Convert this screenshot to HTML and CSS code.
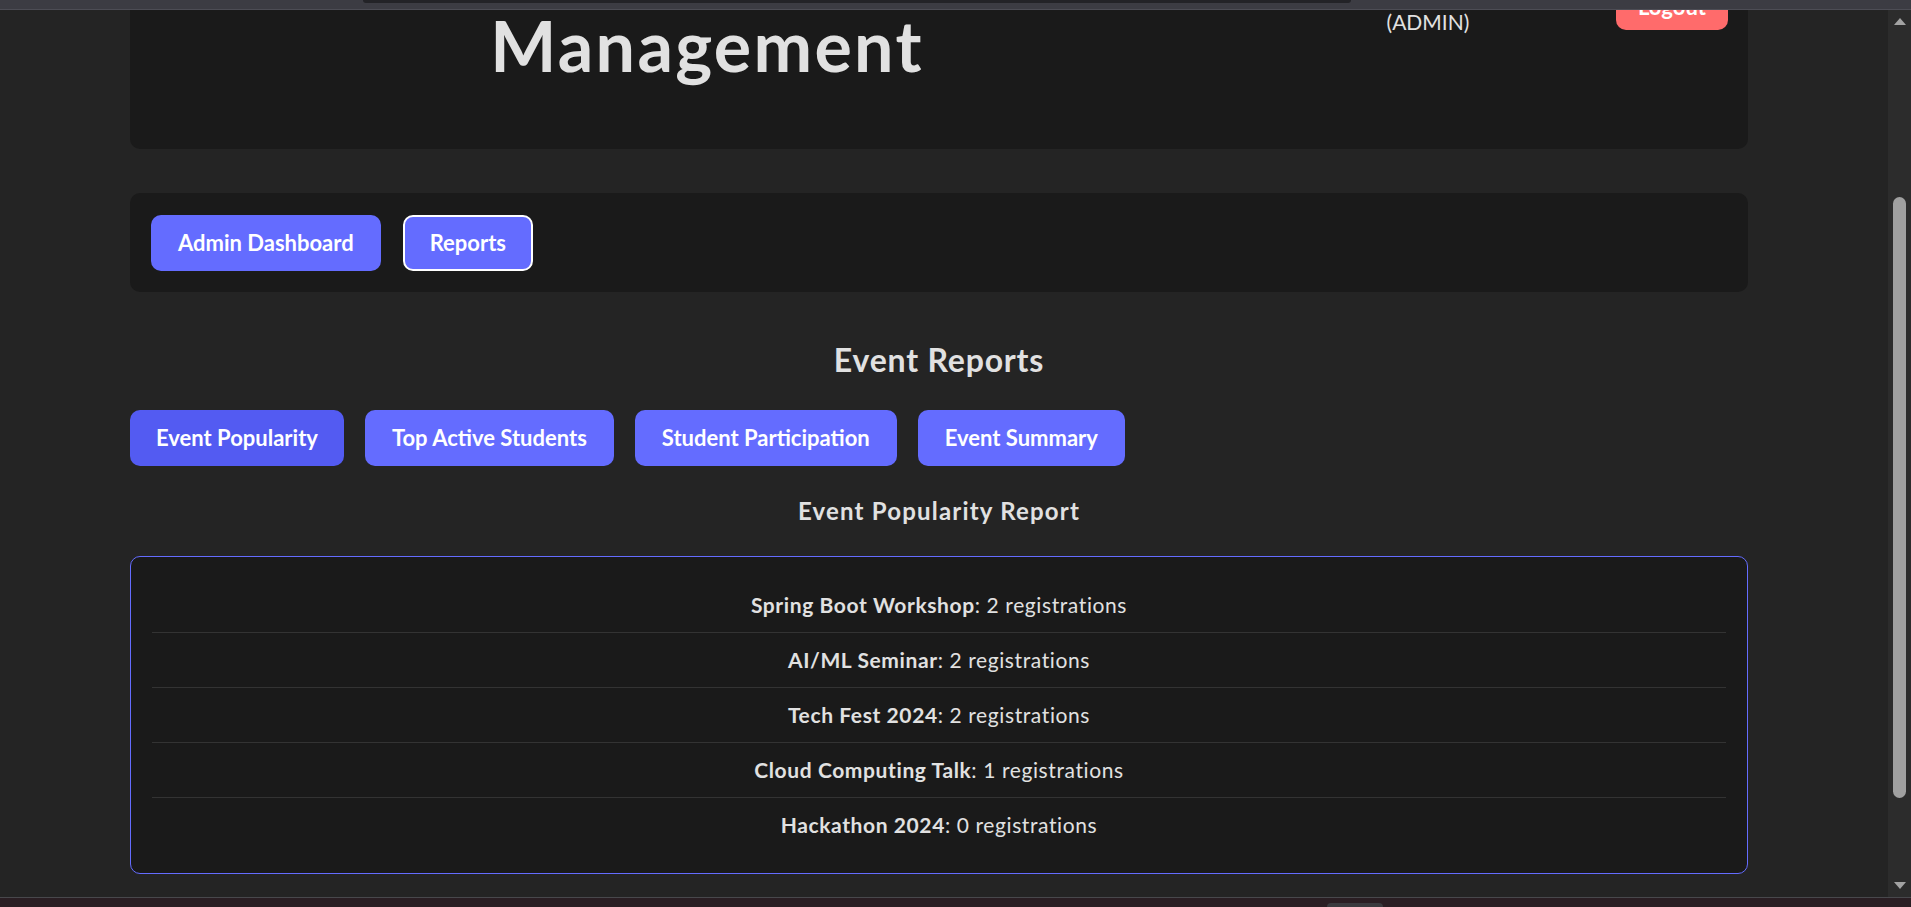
FILE: index.html
```html
<!DOCTYPE html>
<html lang="en">
<head>
<meta charset="utf-8">
<title>Event Reports</title>
<link rel="stylesheet" href="styles.css">
</head>
<body>
<div class="screen">
  <div class="chrome"><div class="chrome-tab"></div></div>
  <div class="middle">
    <div class="viewport">
      <div class="page">
        <header class="card header">
          <h1 class="title"><span class="title-line">College Event</span><span class="title-line">Management</span></h1>
          <div class="user">
            <div>Welcome, Admin</div>
            <div>(ADMIN)</div>
          </div>
          <button class="btn btn-logout">Logout</button>
        </header>

        <nav class="card nav">
          <button class="btn">Admin Dashboard</button>
          <button class="btn btn-current">Reports</button>
        </nav>

        <section class="reports">
          <h2 class="reports-title">Event Reports</h2>
          <div class="tabs">
            <button class="btn btn-tab-active">Event Popularity</button>
            <button class="btn">Top Active Students</button>
            <button class="btn">Student Participation</button>
            <button class="btn">Event Summary</button>
          </div>
          <h3 class="report-title">Event Popularity Report</h3>
          <div class="report-box">
            <ul class="report-list">
              <li><strong>Spring Boot Workshop</strong>: 2 registrations</li>
              <li><strong>AI/ML Seminar</strong>: 2 registrations</li>
              <li><strong>Tech Fest 2024</strong>: 2 registrations</li>
              <li><strong>Cloud Computing Talk</strong>: 1 registrations</li>
              <li><strong>Hackathon 2024</strong>: 0 registrations</li>
            </ul>
          </div>
        </section>
      </div>
    </div>
    <div class="scrollbar">
      <div class="arrow-box"><span class="arrow arrow-up"></span></div>
      <div class="track"><div class="thumb"></div></div>
      <div class="arrow-box"><span class="arrow arrow-down"></span></div>
    </div>
  </div>
  <div class="bottombar"><div class="bottom-tab"></div></div>
</div>
</body>
</html>
```

FILE: styles.css
```css
* { box-sizing: border-box; }

html, body {
  margin: 0;
  padding: 0;
  background: #242424;
}

body {
  font-family: Lato, "Open Sans", "Liberation Sans", sans-serif;
  color: rgba(255, 255, 255, 0.87);
}

.screen {
  width: 1911px;
  height: 907px;
  display: flex;
  flex-direction: column;
  overflow: hidden;
}

/* browser chrome strip at top */
.chrome {
  height: 10px;
  flex: 0 0 10px;
  background: #3c3c43;
  border-bottom: 1px solid #4d4d55;
}
.chrome-tab {
  margin-left: 363px;
  width: 988px;
  height: 3px;
  background: #232327;
  border-radius: 0 0 4px 4px;
}

.middle {
  flex: 1;
  display: flex;
  min-height: 0;
}

.viewport {
  flex: 1;
  overflow: hidden;
  background: #242424;
}

.page {
  margin-left: 130px;
  width: 1618px;
}

.card {
  background: #1a1a1a;
  border-radius: 10px;
}

/* header */
.header {
  margin-top: -99px;
  display: flex;
  align-items: center;
  padding: 20px 20px 66px;
}
.title {
  flex: 0 0 1114px;
  margin: 0;
  text-align: center;
  font-size: 70px;
  line-height: 76px;
  font-weight: 700;
  letter-spacing: 2.3px;
  color: #e1e1e1;
}
.title-line { display: block; }

.user {
  flex: 1;
  margin-right: 24px;
  text-align: center;
  font-size: 21px;
  line-height: 30px;
  color: #e1e1e1;
}

/* buttons */
.btn {
  font-family: Lato, "Open Sans", "Liberation Sans", sans-serif;
  font-size: 22px;
  line-height: 28px;
  font-weight: 700;
  color: #ffffff;
  background: #646cff;
  border: 2px solid transparent;
  border-radius: 10px;
  padding: 12px 25px;
  cursor: pointer;
}
.btn-logout {
  background: #ff6b6b;
  padding: 7px 20px;
}
.btn-current {
  border-color: #ffffff;
}
.btn-tab-active {
  background: #535bf2;
  padding: 12px 24px;
}

/* nav */
.nav {
  margin-top: 44px;
  display: flex;
  gap: 22px;
  padding: 22px 21px 21px;
}

/* reports */
.reports-title {
  margin: 48px 0 0;
  text-align: center;
  font-size: 32px;
  line-height: 40px;
  font-weight: 700;
  letter-spacing: 0.8px;
  color: #e1e1e1;
}
.tabs {
  margin-top: 30px;
  display: flex;
  gap: 21px;
}
.report-title {
  margin: 30px 0 0;
  text-align: center;
  font-size: 24px;
  line-height: 30px;
  font-weight: 700;
  letter-spacing: 1.2px;
  color: #e1e1e1;
}
.report-box {
  margin-top: 30px;
  background: #1a1a1a;
  border: 1px solid #646cff;
  border-radius: 10px;
  padding: 21px 21px 21px;
}
.report-list {
  list-style: none;
  margin: 0;
  padding: 0;
}
.report-list li {
  text-align: center;
  font-size: 21px;
  line-height: 28px;
  letter-spacing: 0.6px;
  padding: 13px 0;
  border-bottom: 1px solid #333333;
  color: #e1e1e1;
}
.report-list li:last-child { border-bottom: none; }
.report-list strong { font-weight: 700; }

/* fake scrollbar */
.scrollbar {
  flex: 0 0 23px;
  width: 23px;
  background: #2c2c2c;
  display: flex;
  flex-direction: column;
}
.arrow-box {
  height: 23px;
  flex: 0 0 23px;
  display: flex;
  align-items: center;
  justify-content: center;
}
.arrow {
  width: 0;
  height: 0;
  border-left: 6px solid transparent;
  border-right: 6px solid transparent;
}
.arrow-up { border-bottom: 7px solid #a3a3a3; }
.arrow-down { border-top: 7px solid #a3a3a3; }
.track { flex: 1; }
.thumb {
  margin: 164px 0 0 5px;
  width: 13px;
  height: 601px;
  background: #a0a0a0;
  border-radius: 7px;
}

/* bottom strip */
.bottombar {
  height: 10px;
  flex: 0 0 10px;
  background: #2a1e23;
  border-top: 1px solid #48484c;
}
.bottom-tab {
  margin: 5px 0 0 1327px;
  width: 56px;
  height: 4px;
  background: #3a3a3e;
  border-radius: 4px 4px 0 0;
}
```
